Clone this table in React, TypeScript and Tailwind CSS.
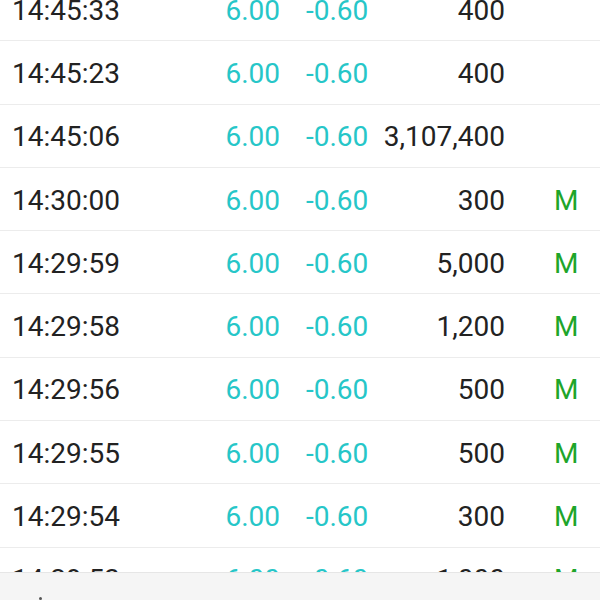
type Trade = {
  time: string;
  price: string;
  change: string;
  volume: string;
  flag?: string;
};

const trades: Trade[] = [
  { time: "14:45:33", price: "6.00", change: "-0.60", volume: "400" },
  { time: "14:45:23", price: "6.00", change: "-0.60", volume: "400" },
  { time: "14:45:06", price: "6.00", change: "-0.60", volume: "3,107,400" },
  { time: "14:30:00", price: "6.00", change: "-0.60", volume: "300", flag: "M" },
  { time: "14:29:59", price: "6.00", change: "-0.60", volume: "5,000", flag: "M" },
  { time: "14:29:58", price: "6.00", change: "-0.60", volume: "1,200", flag: "M" },
  { time: "14:29:56", price: "6.00", change: "-0.60", volume: "500", flag: "M" },
  { time: "14:29:55", price: "6.00", change: "-0.60", volume: "500", flag: "M" },
  { time: "14:29:54", price: "6.00", change: "-0.60", volume: "300", flag: "M" },
  { time: "14:29:53", price: "6.00", change: "-0.60", volume: "1,000", flag: "M" },
];

function TradeRow({ trade }: { trade: Trade }) {
  return (
    <div className="flex h-[63.3px] shrink-0 items-center border-b border-[#ececec] pl-[12px] pt-[3px] text-[28px] leading-none">
      <span className="w-[188px] text-[#222222]">{trade.time}</span>
      <span className="w-[80px] text-right text-[#26c6c8]">{trade.price}</span>
      <span className="w-[90px] pl-[26px] text-[#26c6c8]">{trade.change}</span>
      <span className="w-[135px] text-right text-[#222222]">{trade.volume}</span>
      <span className="pl-[49px] text-[#1ea52a]">{trade.flag}</span>
    </div>
  );
}

export default function App() {
  return (
    <div className="flex h-[600px] w-[600px] flex-col overflow-hidden bg-white font-['Roboto',sans-serif]">
      <div className="flex h-[572px] flex-col overflow-hidden">
        <div className="-mt-[22px] flex flex-col">
          {trades.map((trade) => (
            <TradeRow key={trade.time} trade={trade} />
          ))}
        </div>
      </div>
      <footer className="relative h-[28px] border-t border-[#e6e6e6] bg-[#f5f5f5]">
        <span className="absolute left-[39px] top-[24px] h-[3px] w-[3px] rounded-full bg-[#555555]" />
      </footer>
    </div>
  );
}
